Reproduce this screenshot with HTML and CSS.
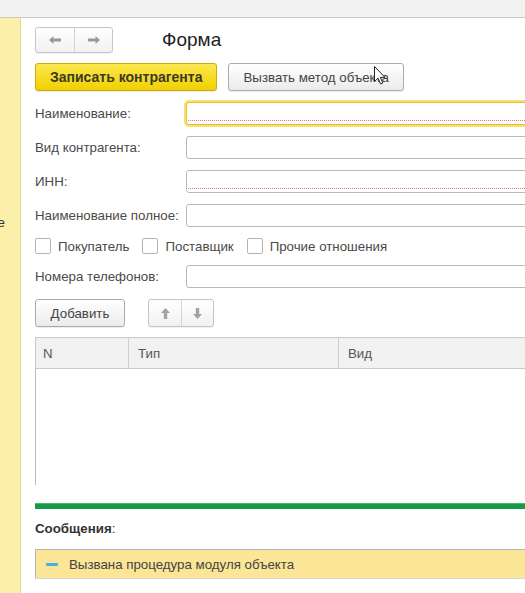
FILE: index.html
```html
<!DOCTYPE html>
<html lang="ru">
<head>
<meta charset="utf-8">
<title>Форма</title>
<link rel="stylesheet" href="styles.css">
</head>
<body>
<div class="topbar"></div>
<div class="layout">
  <aside class="sidebar">
    <div class="side-item"><span>Прочее</span></div>
  </aside>
  <main class="main">
    <div class="nav-row">
      <div class="btn-group nav">
        <button class="icon-btn" type="button" aria-label="Назад">
          <svg width="12" height="8" viewBox="0 0 12 8"><path d="M0 4 L4.5 0 L4.5 2.5 L12 2.5 L12 5.5 L4.5 5.5 L4.5 8 Z" fill="#9a9a9a"/></svg>
        </button>
        <button class="icon-btn" type="button" aria-label="Вперёд">
          <svg width="12" height="8" viewBox="0 0 12 8"><path d="M12 4 L7.5 0 L7.5 2.5 L0 2.5 L0 5.5 L7.5 5.5 L7.5 8 Z" fill="#9a9a9a"/></svg>
        </button>
      </div>
      <h1 class="title">Форма</h1>
    </div>

    <div class="cmd-row">
      <button class="btn btn-primary" type="button">Записать контрагента</button>
      <button class="btn" type="button">Вызвать метод объекта</button>
    </div>

    <div class="form">
      <label class="label">Наименование:</label>
      <div class="input focused required"><div class="req-line"></div></div>

      <label class="label">Вид контрагента:</label>
      <div class="input"></div>

      <label class="label">ИНН:</label>
      <div class="input required"><div class="req-line"></div></div>

      <label class="label">Наименование полное:</label>
      <div class="input"></div>

      <div class="checks">
        <span class="check"><span class="box"></span>Покупатель</span>
        <span class="check"><span class="box"></span>Поставщик</span>
        <span class="check"><span class="box"></span>Прочие отношения</span>
      </div>

      <label class="label">Номера телефонов:</label>
      <div class="input"></div>
    </div>

    <div class="toolbar">
      <button class="btn btn-add" type="button">Добавить</button>
      <div class="btn-group updown">
        <button class="icon-btn" type="button" aria-label="Вверх">
          <svg width="9" height="11" viewBox="0 0 9 11"><path d="M4.5 0 L9 5 L6.2 5 L6.2 11 L2.8 11 L2.8 5 L0 5 Z" fill="#a3a3a3"/></svg>
        </button>
        <button class="icon-btn" type="button" aria-label="Вниз">
          <svg width="9" height="11" viewBox="0 0 9 11"><path d="M4.5 11 L9 6 L6.2 6 L6.2 0 L2.8 0 L2.8 6 L0 6 Z" fill="#a3a3a3"/></svg>
        </button>
      </div>
    </div>

    <div class="table">
      <div class="thead">
        <div class="th th-n">N</div>
        <div class="th th-type">Тип</div>
        <div class="th th-kind">Вид</div>
      </div>
      <div class="tbody"></div>
    </div>

    <div class="splitter"></div>

    <div class="messages-title"><b>Сообщения</b>:</div>
    <div class="message">
      <span class="dash"></span>
      <span>Вызвана процедура модуля объекта</span>
    </div>
  </main>
</div>
<svg class="cursor" width="12" height="19" viewBox="0 0 12 19"><path d="M0.5 0.5 L0.5 15.5 L4 12.2 L6.6 18 L8.8 17 L6.3 11.4 L11 11.4 Z" fill="#fff" stroke="#222" stroke-width="1"/></svg>
</body>
</html>
```

FILE: styles.css
```css
* { box-sizing: border-box; }

html, body {
  margin: 0;
  padding: 0;
  width: 525px;
  height: 593px;
  overflow: hidden;
  background: #ffffff;
  font-family: "Liberation Sans", Arial, sans-serif;
  font-size: 13.3px;
  color: #444;
}

body { position: relative; }

.topbar {
  height: 18px;
  background: #f2f2f2;
  border-bottom: 1px solid #cacaca;
}

.layout {
  display: flex;
  height: 575px;
}

.sidebar {
  width: 21px;
  flex-shrink: 0;
  background: #fcefa9;
  border-right: 1px solid #e9db8c;
  padding-top: 197px;
  overflow: hidden;
}

.side-item {
  display: flex;
  justify-content: flex-end;
  padding-right: 15px;
  white-space: nowrap;
  overflow: hidden;
  color: #333;
  line-height: 16px;
}

.main {
  width: 640px;
  flex-shrink: 0;
  padding-left: 14px;
}

.nav-row {
  display: flex;
  align-items: center;
  margin-top: 9px;
  height: 26px;
}

.btn-group {
  display: flex;
  border: 1px solid #c6c6c6;
  border-radius: 3px;
  background: linear-gradient(#ffffff, #f1f1f1);
  box-shadow: 0 1px 1px rgba(0,0,0,0.06);
  overflow: hidden;
}

.icon-btn {
  display: flex;
  align-items: center;
  justify-content: center;
  border: none;
  background: transparent;
  padding: 0;
  margin: 0;
}

.icon-btn + .icon-btn { border-left: 1px solid #d4d4d4; }

.nav { height: 26px; }
.nav .icon-btn { width: 38px; height: 24px; }

.title {
  margin: 0 0 0 49px;
  font-size: 19px;
  font-weight: normal;
  color: #1e1e1e;
  line-height: 22px;
}

.cmd-row {
  display: flex;
  gap: 11px;
  margin-top: 10px;
}

.btn {
  height: 28px;
  padding: 0 14px;
  border: 1px solid #acacac;
  border-radius: 3px;
  background: linear-gradient(#ffffff, #ebebeb);
  font-family: inherit;
  font-size: 13.3px;
  color: #444;
  box-shadow: 0 1px 1px rgba(0,0,0,0.08);
}

.btn-primary {
  background: linear-gradient(#fce84e, #f1d000);
  border-color: #cbab10;
  font-weight: bold;
  font-size: 14px;
  color: #3a3a2a;
}

.form {
  display: grid;
  grid-template-columns: 151px 1fr;
  row-gap: 11px;
  align-items: center;
  margin-top: 11px;
}

.label {
  color: #4a4a4a;
  white-space: nowrap;
  line-height: 16px;
}

.input {
  height: 23px;
  border: 1px solid #b9b9b9;
  border-radius: 3px;
  background: #fff;
  display: flex;
  align-items: flex-end;
  padding: 0 3px 3px 1px;
}

.input.focused {
  border-color: #e5c42e;
  box-shadow: 0 0 0 2px #f7df72;
}

.req-line {
  flex: 1;
  height: 1px;
  border-bottom: 1px dotted #ea6f80;
}

.checks {
  grid-column: 1 / -1;
  display: flex;
  gap: 13px;
  height: 16px;
  align-items: center;
}

.check {
  display: flex;
  align-items: center;
  gap: 7px;
  color: #4a4a4a;
}

.box {
  width: 16px;
  height: 16px;
  border: 1px solid #b4b4b4;
  border-radius: 2px;
  background: #fff;
}

.toolbar {
  display: flex;
  align-items: center;
  gap: 23px;
  margin-top: 11px;
}

.btn-add { height: 28px; width: 90px; padding: 0; }

.updown { height: 28px; }
.updown .icon-btn { width: 32px; height: 26px; }

.table {
  margin-top: 10px;
}

.thead {
  display: flex;
  height: 32px;
  background: #f1f1f1;
  border: 1px solid #c9c9c9;
}

.th {
  display: flex;
  align-items: center;
  color: #555;
  padding-left: 9px;
}

.th-n { width: 93px; padding-left: 7px; border-right: 1px solid #cfcfcf; }
.th-type { width: 210px; border-right: 1px solid #cfcfcf; }
.th-kind { flex: 1; }

.tbody {
  height: 116px;
  border-left: 1px solid #b9b9b9;
}

.splitter {
  margin-top: 18px;
  height: 6px;
  background: #17994a;
  border-top: 1px solid #4db574;
}

.messages-title {
  margin-top: 12px;
  line-height: 16px;
  color: #333;
}

.messages-title b { color: #333; }

.message {
  margin-top: 12px;
  height: 30px;
  display: flex;
  align-items: center;
  gap: 11px;
  padding-left: 10px;
  background: #fbe596;
  border: 1px solid #b8b8b8;
  border-bottom-color: #d8d8d8;
  color: #444;
}

.dash {
  width: 12px;
  height: 3px;
  background: #4aaee0;
  border-radius: 1px;
}

.cursor {
  position: absolute;
  left: 374px;
  top: 66px;
}
```
